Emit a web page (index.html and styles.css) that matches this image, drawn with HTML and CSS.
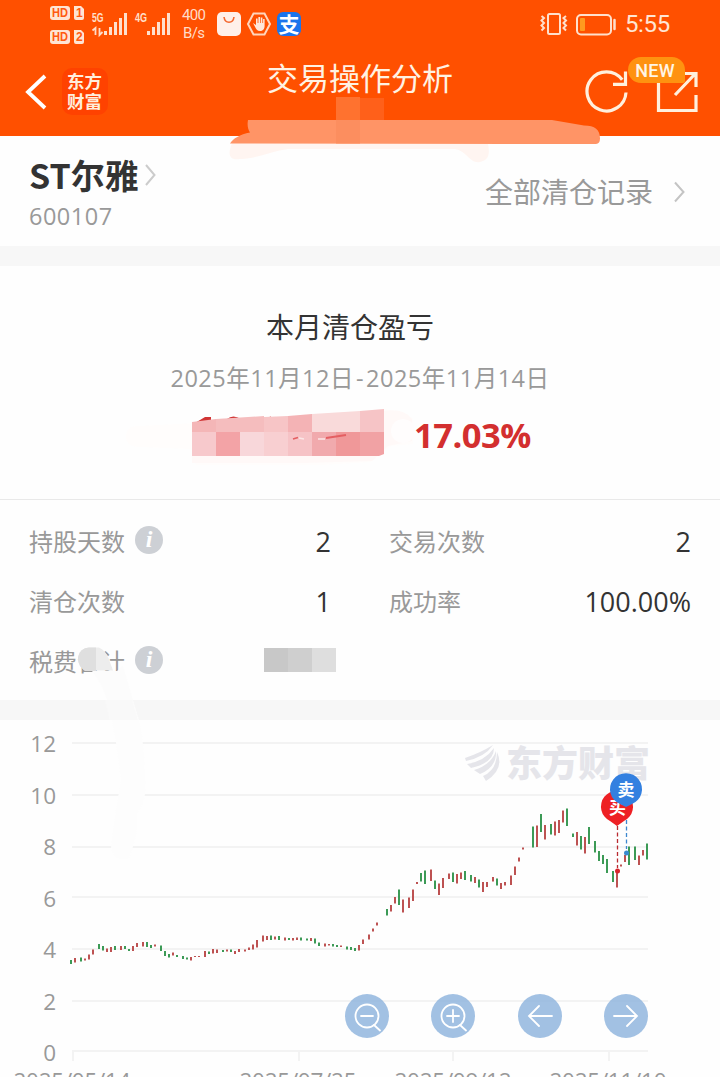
FILE: index.html
```
<!DOCTYPE html>
<html lang="zh-CN">
<head>
    <meta charset="UTF-8">
    <meta name="viewport" content="width=device-width, initial-scale=1.0">
    <title>交易操作分析</title>
    <link rel="stylesheet" href="styles.css">
</head>
<body>
    <header class="header">
        <div class="status">
            <svg class="status-left" width="260" height="48" viewBox="48 0 260 48">
                <g fill="#ffe5d3">
                    <rect x="50" y="6" width="20" height="14" rx="3"/>
                    <path d="M74 6h7l3 3v9a2 2 0 0 1-2 2h-6a2 2 0 0 1-2-2z"/>
                    <rect x="50" y="30" width="20" height="14" rx="3"/>
                    <path d="M74 30h7l3 3v9a2 2 0 0 1-2 2h-6a2 2 0 0 1-2-2z"/>
                </g>
                <g class="tag">
                    <text x="52" y="17.2" textLength="16" lengthAdjust="spacingAndGlyphs">HD</text>
                    <text x="76" y="17.2">1</text>
                    <text x="52" y="41.2" textLength="16" lengthAdjust="spacingAndGlyphs">HD</text>
                    <text x="76" y="41.2">2</text>
                </g>
                <g class="net">
                    <text x="92" y="22" textLength="11.5" lengthAdjust="spacingAndGlyphs">5G</text>
                    <text x="135" y="22" textLength="12" lengthAdjust="spacingAndGlyphs">4G</text>
                </g>
                <path d="M92.500 30.500l3-2.500v7M99.500 28v7l3-3" fill="none" stroke="#ffdcc8" stroke-width="1.800"/>
                <path d="M105.500 31v4M110.500 27v8M115.500 22v13M120.500 18v17M125.500 13v22M148.500 31v4M153.500 27v8M158.500 22v13M163.500 18v17M168.500 13v22" stroke="#ffe0cc" stroke-width="3"/>
                <g class="speed">
                    <text x="182" y="20" textLength="24">400</text>
                    <text x="183" y="38" textLength="22">B/s</text>
                </g>
                <rect x="217" y="12" width="24" height="24" rx="5" fill="#fff0e9"/>
                <path d="M224 17c1 7 9 7 10 0" fill="none" stroke="#f4682f" stroke-width="1.600"/>
                <path d="M253.500 13.500h11l5.500 10.500l-5.500 10.500h-11L248 24z" fill="none" stroke="#ffd6bd" stroke-width="2"/>
                <path d="M253 23l3 2v-6.500h1.600V23h.8v-6h1.700v6h.7v-5.500h1.600V23h.7v-4h1.500v7c0 3-2 5-4.500 5c-3 0-4-2-5-4z" fill="#ffe8da"/>
                <rect x="277" y="12" width="24" height="24" rx="6" fill="#1b74ec"/>
                <text class="pay" x="278.500" y="32">支</text>
            </svg>
            <div class="status-right">
                <svg width="77" height="26" viewBox="540 11 77 26" fill="none" stroke="#ffe0cc" stroke-width="2">
                    <rect x="548" y="14" width="12" height="20" rx="1.500"/>
                    <path d="M541.500 16l2.500 2l-2.500 2.500l2.500 2.500l-2.500 2.500l2.500 2.500l-2.500 2.500M566 16l-2.500 2l2.500 2.500l-2.500 2.500l2.500 2.500l-2.500 2.500l2.500 2.500"/>
                    <rect x="577" y="15" width="34" height="19.500" rx="4"/>
                    <path d="M614.500 20v9" stroke-width="2.500" stroke-linecap="round"/>
                    <rect x="580" y="18" width="5" height="13" rx="1" fill="#ff9a1f" stroke="none"/>
                </svg>
                <span class="time">5:55</span>
            </div>
        </div>
        <div class="nav">
            <div class="nav-left">
                <svg width="24" height="38" viewBox="0 0 24 38"><path d="M21 3L4 19L21 35" fill="none" stroke="#fff" stroke-width="3.800"/></svg>
                <div class="brand"><span>东方</span><span>财富</span></div>
            </div>
            <h1 class="title">交易操作分析</h1>
            <div class="nav-right">
                <svg width="114" height="44" viewBox="584 69 114 44" fill="none" stroke="#fff0dd" stroke-width="3.200">
                    <path d="M626 92.500a19.500 19.500 0 1 1-3.800-12.700"/>
                    <path d="M613 84.300h12.500V71.500"/>
                    <path d="M669 73h-10.500v37.500H696V95M675 95l20-21M684 73.500h12V87"/>
                </svg>
                <span class="badge">NEW</span>
            </div>
        </div>
        <svg class="smudge" width="720" height="80" viewBox="0 90 720 80">
            <path d="M232 143c-4 10-4 18 8 16c12 1 32-8 48-10H455c12 2 15 15 25 13c9-2 10-8 8-18z" fill="#fff5f1"/>
            <path d="M336 97h24v24h-24z" fill="#ff722f"/>
            <path d="M360 98h24v23h-24z" fill="#ff601a"/>
            <path d="M230 143.500c3-5 10-9 20-11c-2-3-3-7-2-12.500H552l32 5.500c11 0 16 4 16 13q0 5-4 5.500z" fill="#ff9466"/>
            <path d="M336 120h24v23.500h-24z" fill="#fc8e5f"/>
        </svg>
    </header>

    <section class="stock">
        <div>
            <div class="stock-name">ST尔雅<svg width="14" height="26" viewBox="0 0 14 26"><path d="M2 3l8.500 10L2 23" fill="none" stroke="#ccc" stroke-width="2"/></svg></div>
            <div class="stock-code">600107</div>
        </div>
        <div class="records">全部清仓记录<svg width="16" height="26" viewBox="0 0 16 26"><path d="M3 3.500l8.500 9.500L3 22.500" fill="none" stroke="#c4c4c4" stroke-width="2"/></svg></div>
    </section>

    <section class="profit">
        <h2 class="profit-title">本月清仓盈亏</h2>
        <div class="profit-date">2025年11月12日<i>-</i>2025年11月14日</div>
        <div class="profit-row">
            <svg width="290" height="64" viewBox="124 405 290 64">
                <path d="M126 437q0-12 14-11l56-3l190-14l27 9v26l-22 2l-20 16l-50 3H196l-5-16l-50-2q-15 0-15-10z" fill="#fffdfc"/>
                <path d="M384 411q20-3 28 8v22l-24 5l-16 15l-68 2H192v-8h192z" fill="#fff9f8"/>
                <path d="M195 423l10-6h6v6zM227 419q6-5 14 0zM264 418.500l7-2v2z" fill="#d03535"/>
                <path d="M192 422l24-3v13h-24z" fill="#f4b6b7"/>
                <path d="M216 419l48-3v16h-48z" fill="#f5bdbe"/>
                <path d="M264 417l24-1v16h-24z" fill="#f7c5c6"/>
                <path d="M288 416l24-2v18h-24z" fill="#f4b3b5"/>
                <path d="M312 414l48-3v21h-48z" fill="#f9dada"/>
                <path d="M360 411l24-2v23h-24z" fill="#f6c4c6"/>
                <path d="M192 432h24v24h-24z" fill="#f7c9cc"/>
                <path d="M216 432h24v24h-24z" fill="#f3a3a6"/>
                <path d="M240 432h24v24h-24z" fill="#f8d7da"/>
                <path d="M264 432h24v24h-24z" fill="#f8cfd1"/>
                <path d="M288 432h24v24h-24z" fill="#f6c3c6"/>
                <path d="M312 432h24v24h-24z" fill="#f1aaad"/>
                <path d="M336 432h24v24h-24z" fill="#f09899"/>
                <path d="M360 432h24v22l-5 2h-19z" fill="#f1a2a4"/>
                <path d="M293 439l5-1.500M326 438l20-3" stroke="#e45f62" stroke-width="1.800"/>
                <path d="M318 439h7M299 438l5 1" stroke="#fbe6e6" stroke-width="1.500"/>
                <circle cx="403" cy="431" r="12" fill="#fffdfd"/>
            </svg>
            <span class="percent">17.03%</span>
        </div>
    </section>

    <section class="stats">
        <div class="stat">
            <span class="label">持股天数</span><span class="info">i</span>
            <b class="value">2</b>
        </div>
        <div class="stat">
            <span class="label">交易次数</span>
            <b class="value">2</b>
        </div>
        <div class="stat">
            <span class="label">清仓次数</span>
            <b class="value">1</b>
        </div>
        <div class="stat">
            <span class="label">成功率</span>
            <b class="value">100.00%</b>
        </div>
        <div class="stat">
            <span class="label">税费合计</span><span class="info">i</span>
            <span class="masked"><i></i><i></i><i></i></span>
        </div>
    </section>

    <section class="chart">
        <svg width="720" height="357" viewBox="0 720 720 357">
            <g class="watermark">
                <path d="M465 758q15-5 28-13q-8 12-27 16zM467 764q18-3 27-16q0 15-23 20zM474 770q17-5 22-19q1 16-16 23zM483 776q14-6 14-24q8 17-11 29z"/>
                <text x="506" y="777" textLength="144">东方财富</text>
            </g>
            <path class="grid" d="M72 743H648M72 795H648M72 847H648M72 897H648M72 949H648M72 1001H648M72 1051H648M73 1051v10M299 1051v10M453 1051v10M609 1051v10"/>
            <path d="M112 720q6 32 9 60q-7 40-10 67q3 16 18 11q10-25 8-45q11-14 8-35q-1-38-6-58z" fill="#fdfdfd"/>
            <g class="axis axis-y">
                <text x="56" y="751.500">12</text>
                <text x="56" y="803.500">10</text>
                <text x="56" y="854.500">8</text>
                <text x="56" y="906.500">6</text>
                <text x="56" y="957.500">4</text>
                <text x="56" y="1009.500">2</text>
                <text x="56" y="1060.500">0</text>
            </g>
            <g class="axis axis-x">
                <text x="72" y="1088.500" textLength="117">2025/05/14</text>
                <text x="298" y="1088.500" textLength="117">2025/07/25</text>
                <text x="453" y="1088.500" textLength="117">2025/09/12</text>
                <text x="608" y="1088.500" textLength="117">2025/11/10</text>
            </g>
            <path class="down" d="M71 960V964M81 957.500V961.500M99 944V949M103 946V950.500M115 946V950M125 946V949M129 949V951M147 942V947M151 945V948M161 945.500V951M165 951V956M169 954V957.500M177 955V957M183 956V959M187 957.500V959.500M209 951.500V954M223 950V952M231 949.500V952M271 935.500V940M279 936V940M289 938V940M301 937.500V940.500M307 938.500V940.500M315 938.500V943.500M319 942.500V946M333 944V946.500M337 945V947M347 946.500V949.500M351 947V950M355 948V951M387 909V915.500M399 889.500V905M421 873V881.500M425 870.500V884M435 880.500V889M453 872.500V882M465 871V880M471 875V881.500M479 879.500V887.500M497 878.500V885.500M533 826.500V847.500M541 814V832M551 824V834.500M567 808.500V826M573 833.500V837M581 836V849.500M589 827V844M595 841V852.500M599 851V861M603 855V864M607 859V873M613 871V882M629 846.500V865M635 846.500V860M647 843.500V859.500"/>
            <path class="up" d="M75 958V962.500M85 958.500V960.500M89 954.500V959.500M93 949.500V954.500M107 948.500V952M111 947V952M121 946V950M133 946V951M137 943V947M143 942V946.500M155 944.500V946.500M173 952.500V955.500M191 957V960.500M195 956V957M199 956V957M205 951V957M213 949V953.500M217 949.500V953M227 949.500V951.500M235 951V954M239 949V952M245 949.500V951.500M249 947.500V950M253 944.500V949.500M257 940V947.500M263 935.500V941.500M267 936V940M275 936.500V939.500M285 937.500V940.500M293 938V940.500M297 937.500V940M311 938V941M325 943.500V946.500M329 944V945.500M341 945.500V947M359 945V950.500M363 939.500V944M369 934.500V939.500M373 928.500V931.500M377 922.500V925.500M391 905V911.500M395 897V903.500M403 899.500V912.500M409 897.500V908M413 889.500V901M417 882V884M431 869.500V881M439 883.500V895M443 878V888M449 873.500V879M457 874V883.500M461 872.500V879M475 877V883M483 882V892M487 882V887M493 877V881.500M501 883V889M505 882V885.500M511 875.500V885M515 866.500V875M519 857.500V861.500M523 847.500V849.500M537 825.500V847M545 825V839.500M555 821.500V835.500M559 820V833M563 810.500V822.500M577 832V845.500M585 837V853.500M617 871V887.500M621 864.500V866.500M625 855V862M639 855.500V865M643 850V855.500"/>
            <!-- buy / sell markers -->
            <path d="M617.500 826V868" stroke="#b92a30" stroke-width="1.300" stroke-dasharray="4 2.500"/>
            <circle cx="617.500" cy="871" r="2.500" fill="#d8252c"/>
            <path d="M626.500 807V849" stroke="#3c87cf" stroke-width="1.300" stroke-dasharray="4 2.500"/>
            <circle cx="626.500" cy="853" r="2.500" fill="#3a8bd0"/>
            <path d="M617 826l-7-5a16 16 0 1 1 14 0z" fill="#ee2024"/>
            <text class="mark" x="609" y="813.500">买</text>
            <path d="M626 807l-6-3a16 16 0 1 1 12 0z" fill="#3380e0"/>
            <text class="mark" x="617.500" y="795.500">卖</text>
        </svg>
        <div class="tools">
            <button class="tool"><svg viewBox="0 0 44 44"><circle cx="22" cy="22" r="11.500"/><path d="M16 22h12M29 31l6 5.500"/></svg></button>
            <button class="tool"><svg viewBox="0 0 44 44"><circle cx="22" cy="22" r="11.500"/><path d="M16 22h12M22 16v12M29 31l6 5.500"/></svg></button>
            <button class="tool"><svg viewBox="0 0 44 44"><path d="M34 22H11M21 12L11 22l10 10"/></svg></button>
            <button class="tool"><svg viewBox="0 0 44 44"><path d="M10 22h23M23 12l10 10l-10 10"/></svg></button>
        </div>
    </section>
    <svg class="smear" width="80" height="74" viewBox="78 646 80 74">
        <path d="M92 671h25l6-5l9 31l7 23h-29q-1-28-18-49z" fill="#fcfcfc"/>
        <path d="M105 700h27l6 20h-28z" fill="#f9f9f9"/>
        <path d="M78 657q2-9 11-9.500h10q7 3 10 12l4 11H85q-7-5-7-12z" fill="#ededed"/>
        <path d="M78 657q2-9 11-9.500h7V671H85q-7-5-7-12z" fill="#dfdfdf"/>
    </svg>
</body>
</html>
```

FILE: styles.css
```
* {
    box-sizing: border-box;
}
body {
    margin: 0;
    width: 720px;
    height: 1077px;
    overflow: hidden;
    position: relative;
    background-color: #fefefe;
    color: #333;
    font-family: "Open Sans", "Noto Sans CJK SC", sans-serif;
}
svg {
    display: block;
    flex-shrink: 0;
}
.header {
    position: relative;
    height: 136px;
    background-color: #ff5000;
}
.status {
    display: flex;
    justify-content: space-between;
    height: 48px;
    padding: 0 50px 0 48px;
}
.status-right {
    display: flex;
    align-items: center;
    gap: 8px;
    height: 48px;
}
.time {
    font-family: Roboto, sans-serif;
    font-size: 24px;
    line-height: 50px;
    color: #ffe5d3;
    letter-spacing: -0.3px;
}
.tag {
    font: 700 12px "Liberation Sans", sans-serif;
    fill: #ff5a10;
}
.net {
    font: 700 12px "Liberation Sans", sans-serif;
    fill: #ffe0cc;
}
.speed {
    font: 15px Roboto, sans-serif;
    fill: #ffdcc8;
}
.pay {
    font: 700 21px "Noto Sans CJK SC", sans-serif;
    fill: #fff;
}
.nav {
    display: grid;
    grid-template-columns: 1fr 186px 1fr;
    height: 88px;
    padding: 0 22px 0 24px;
}
.nav-left {
    display: flex;
    align-items: center;
    gap: 14px;
}
.brand {
    display: flex;
    flex-direction: column;
    width: 46px;
    height: 47px;
    margin-top: -1px;
    padding: 3px 0 0 5px;
    border-radius: 10px;
    background-color: #ff4200;
    color: #ffeedd;
    font: 700 17.5px/20px "Noto Sans CJK SC", sans-serif;
    white-space: nowrap;
}
.title {
    margin: 6px 0 0 -1px;
    font: 400 31px/46px "Noto Sans CJK SC", sans-serif;
    color: #fff2e3;
    white-space: nowrap;
}
.nav-right {
    position: relative;
    display: flex;
    justify-content: flex-end;
    padding-top: 21px;
}
.badge {
    position: absolute;
    right: 13px;
    top: 9px;
    width: 57px;
    height: 26px;
    border-radius: 13px 13px 2px 13px;
    background-color: #ff9210;
    color: #fff5e5;
    font: 500 18px/27px Roboto, sans-serif;
    letter-spacing: 0.3px;
    padding-right: 3px;
    text-align: center;
}
.smudge {
    position: absolute;
    left: 0;
    top: 90px;
}
.stock {
    display: flex;
    justify-content: space-between;
    height: 110px;
    padding: 16px 32px 0 29px;
}
.stock-name {
    display: flex;
    align-items: center;
    gap: 5px;
    height: 46px;
    font: 700 34px/46px "Noto Sans CJK SC", sans-serif;
}
.stock-code {
    font-size: 23.5px;
    line-height: 36px;
    letter-spacing: 0.5px;
    color: #999;
}
.records {
    display: flex;
    align-items: center;
    gap: 19px;
    height: 79px;
    font: 400 28px/79px "Noto Sans CJK SC", sans-serif;
    color: #999;
}
.profit {
    height: 254px;
    padding-top: 39px;
    border-top: 20px solid #f7f7f7;
    border-bottom: 1px solid #e9e9e9;
    text-align: center;
}
.profit-title {
    margin: 0;
    padding-right: 20px;
    font: 400 28px/42px "Noto Sans CJK SC", sans-serif;
}
.profit-date {
    margin-top: 14px;
    font-size: 23.5px;
    line-height: 34px;
    letter-spacing: 0.5px;
    color: #999;
}
.profit-date i {
    font-style: normal;
    padding: 0 2px;
}
.profit-row {
    display: flex;
    height: 64px;
    margin-top: 10px;
    padding-left: 124px;
}
.percent {
    font-size: 34.5px;
    font-weight: 700;
    line-height: 60px;
    letter-spacing: -0.5px;
    color: #d32f2f;
}
.stats {
    display: grid;
    grid-template-columns: 302px 302px;
    grid-auto-rows: 60px;
    column-gap: 58px;
    height: 200px;
    padding: 11px 0 0 29px;
}
.stat {
    display: flex;
    align-items: center;
}
.label {
    flex-shrink: 0;
    font: 400 24px/60px "Noto Sans CJK SC", sans-serif;
    color: #999;
    white-space: nowrap;
}
.info {
    flex-shrink: 0;
    width: 28px;
    height: 28px;
    margin: -3px 0 0 10px;
    border-radius: 50%;
    background-color: #cdd0d5;
    color: #fff;
    font: italic 700 24px/27px "Liberation Serif", serif;
    text-align: center;
}
.value {
    margin-left: auto;
    font-size: 27px;
    font-weight: 400;
}
.masked {
    display: flex;
    flex-shrink: 0;
    margin: -3px 0 0 101px;
}
.masked i {
    width: 24px;
    height: 24px;
    background-color: #c8c8c8;
}
.masked i:nth-child(2) {
    background-color: #cfcfcf;
}
.masked i:nth-child(3) {
    background-color: #dedede;
}
.chart {
    position: relative;
    height: 377px;
    border-top: 20px solid #f7f7f7;
}
.grid {
    fill: none;
    stroke: #f3f3f3;
    stroke-width: 2;
}
.axis {
    font-size: 22.5px;
    fill: #999;
}
.axis-y {
    text-anchor: end;
}
.axis-x {
    text-anchor: middle;
}
.up {
    stroke: #bd5252;
    stroke-width: 2;
}
.down {
    stroke: #3c9a56;
    stroke-width: 2;
}
.watermark {
    fill: #e5e5ea;
    font: 900 36px "Noto Sans CJK SC", sans-serif;
}
.mark {
    fill: #fff;
    font: 700 17px "Noto Sans CJK SC", sans-serif;
}
.tools {
    position: absolute;
    left: 345px;
    top: 274px;
    display: flex;
    gap: 42.3px;
}
.tool {
    width: 44px;
    height: 44px;
    padding: 0;
    border: none;
    border-radius: 50%;
    background-color: rgba(139, 177, 220, 0.8);
}
.tool svg {
    width: 44px;
    height: 44px;
    fill: none;
    stroke: #fff;
    stroke-width: 1.8;
    stroke-linecap: round;
}
.smear {
    position: absolute;
    left: 78px;
    top: 646px;
}
```
